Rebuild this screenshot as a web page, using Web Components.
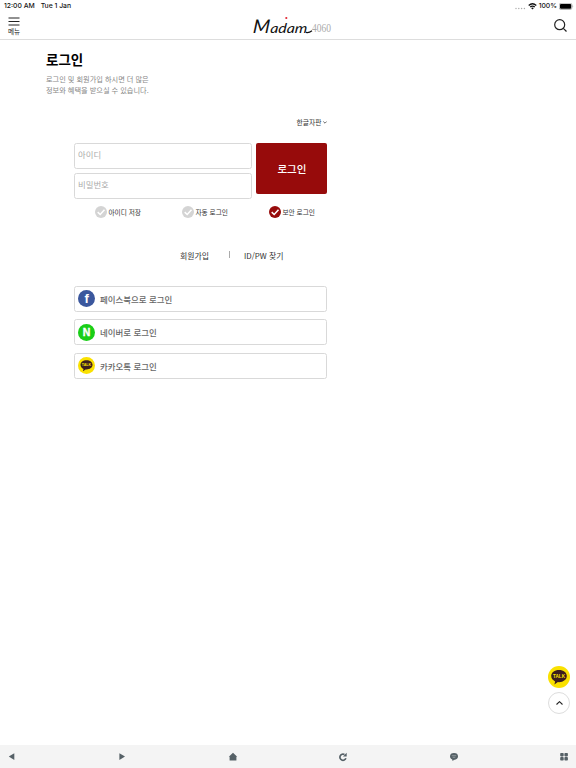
<!DOCTYPE html>
<html lang="ko">
<head>
<meta charset="utf-8">
<title>로그인</title>
<style>
  html, body { margin: 0; height: 100%; }
  body {
    background: #fff;
    color: #222;
    font-family: "Noto Sans CJK KR", "Noto Sans", sans-serif;
    overflow: hidden;
  }
</style>
</head>
<body>
<mall-app></mall-app>
<script>
const define = (name, html) => {
  customElements.define(name, class extends HTMLElement {
    constructor() {
      super();
      this.attachShadow({ mode: "open" });
      this.shadowRoot.innerHTML = html;
    }
  });
};

// device status line
define("status-bar", `
  <style>
    :host {
      display: flex; justify-content: space-between; align-items: center;
      height: 12px; padding: 0 2px 0 4px; box-sizing: border-box;
      font: 500 6.8px/12px Inter, sans-serif; color: #111;
    }
    div { display: flex; align-items: center; }
    .time { gap: 6px; }
    .state { gap: 2px; }
    svg { display: block; }
  </style>
  <div class="time"><span>12:00 AM</span><span>Tue 1 Jan</span></div>
  <div class="state">
    <svg width="11" height="8" viewBox="0 0 11 8" fill="#aaa"><circle cx="1" cy="6.5" r=".7"/><circle cx="3.8" cy="6.5" r=".7"/><circle cx="6.6" cy="6.5" r=".7"/><circle cx="9.4" cy="6.5" r=".7"/></svg>
    <svg width="9" height="7" viewBox="0 0 9 7" fill="none" stroke="#111" stroke-width="1.3"><path d="M.7 2.5Q4.5-.9 8.3 2.5M2.2 4.1Q4.5 2.1 6.8 4.1"/><path d="M3.1 5Q4.5 4 5.9 5L4.5 6.6z" fill="#111" stroke="none"/></svg>
    <span>100%</span>
    <svg width="15" height="7" viewBox="0 0 15 7"><rect x=".3" y=".3" width="12.6" height="6.2" rx="1.6" fill="#fff" stroke="#777" stroke-width=".5"/><rect x="1" y="1" width="11.2" height="4.8" rx="1"/><path d="M13.7 2.3q1 .9 0 2z" fill="#777"/></svg>
  </div>`);

define("brand-logo", `
  <style>:host { display: block; } svg { display: block; overflow: visible; }</style>
  <svg width="80" height="20" viewBox="0 0 80 20">
    <g transform="translate(.5 17) skewX(-5)" font-family="Lato" font-style="italic" fill="#111">
      <text x="0" y="0" textLength="17" lengthAdjust="spacingAndGlyphs" font-size="19">M</text>
      <text x="17.5" y="0" textLength="37" lengthAdjust="spacingAndGlyphs" font-size="13.5">adam</text>
    </g>
    <path d="M54 16.4Q57 17 60 14.8" fill="none" stroke="#111" stroke-width="1.2"/>
    <circle cx="34.3" cy="2" r="1.1" fill="#e22632"/>
    <text x="60" y="16.3" textLength="19" lengthAdjust="spacingAndGlyphs" font-family="Liberation Serif" font-size="12.5" fill="#aaa">4060</text>
  </svg>`);

define("site-header", `
  <style>
    :host {
      display: grid; grid-template-columns: 1fr 80px 1fr;
      height: 28px; padding: 0 9px 0 8px; box-sizing: border-box;
      border-bottom: 1px solid #ddd;
    }
    .menu { display: flex; flex-direction: column; align-items: flex-start; gap: 1px; padding-top: 5px; font-size: 6.6px; line-height: 9px; color: #222; }
    brand-logo { padding: 4px 0 0 4.5px; }
    .search { justify-self: end; padding-top: 7px; }
    svg { display: block; }
  </style>
  <div class="menu">
    <svg width="12" height="9" viewBox="0 0 12 9" stroke="#222"><path d="M.5 1h11M.5 4.5h11M.5 8h11"/></svg>
    <span>메뉴</span>
  </div>
  <brand-logo></brand-logo>
  <div class="search">
    <svg width="13" height="13" viewBox="0 0 13 13" fill="none" stroke="#222" stroke-width="1.2"><circle cx="5.7" cy="5.7" r="5"/><path d="M9.3 9.3L12.5 12.5"/></svg>
  </div>`);

define("text-field", `
  <style>
    :host {
      display: block; height: 26px; box-sizing: border-box; padding-left: 2.6px;
      border: 1px solid #d9d9d9; border-radius: 2.5px;
      font-size: 8.4px; line-height: 21px; color: #aaa;
    }
  </style>
  <slot></slot>`);

define("check-option", `
  <style>
    :host { display: flex; align-items: center; gap: 1px; font-size: 6.7px; line-height: 12px; color: #333; --tick: #d4d4d4; }
    :host([checked]) { --tick: #970b0b; }
    svg { display: block; }
    span { white-space: nowrap; }
  </style>
  <svg width="12" height="12" viewBox="0 0 12 12"><circle cx="6" cy="6" r="6" fill="var(--tick)"/><path d="M2.7 6.1L5.2 8.5L9.5 3.7" fill="none" stroke="#fff" stroke-width="1.5"/></svg>
  <span><slot></slot></span>`);

define("talk-icon", `
  <style>:host { display: block; } svg { display: block; width: 100%; height: 100%; }</style>
  <svg viewBox="0 0 22 22">
    <circle cx="11" cy="11" r="11" fill="#fae100"/>
    <path d="M11 4.1c4.5 0 7.8 2.6 7.8 6s-3.3 6.1-7.8 6.1l-1.1-.1-3.5 2.5.7-3.2C4.8 14.4 3.2 12.4 3.2 10.1c0-3.4 3.3-6 7.8-6z" fill="#3b1e1e"/>
    <text x="11" y="12" text-anchor="middle" textLength="12" lengthAdjust="spacingAndGlyphs" font-family="Liberation Sans" font-weight="700" font-size="5.2" fill="#fae100">TALK</text>
  </svg>`);

define("social-button", `
  <style>
    :host {
      display: flex; align-items: center; gap: 5px;
      height: 26px; box-sizing: border-box; padding-left: 2.6px;
      border: 1px solid #d9d9d9; border-radius: 2.5px;
      font-size: 8.45px; font-weight: 500; line-height: 24px; color: #666;
    }
    ::slotted([slot=icon]) { display: block; width: 17px; height: 17px; overflow: visible; }
  </style>
  <slot name="icon"></slot><span><slot></slot></span>`);

define("login-form", `
  <style>
    :host { display: block; width: 253px; margin-left: 74.4px; }
    .keyboard { display: flex; justify-content: flex-end; align-items: center; gap: 2px; height: 12px; font-size: 6.8px; line-height: 12px; color: #333; }
    .entry { display: grid; grid-template-columns: 177.5px 71px; gap: 4.5px; margin-top: 15px; }
    .fields { display: flex; flex-direction: column; gap: 4px; }
    .submit {
      height: 51px; border-radius: 2px; background: #970b0b; color: #fff;
      text-align: center; font-size: 10.5px; font-weight: 500; line-height: 51px;
    }
    .options { display: flex; padding-left: 21px; margin-top: 7.4px; }
    check-option { width: 87px; }
    check-option[checked] { width: 50px; }
    .links { display: flex; align-items: center; height: 12px; margin: 31.6px 0 0 105.6px; font-size: 7.9px; line-height: 12px; color: #333; }
    .links i { width: 1px; height: 7px; margin: 0 13.6px 2px 20.4px; background: #aaa; }
    .social { display: flex; flex-direction: column; gap: 7.6px; margin-top: 23.8px; }
    svg { display: block; }
  </style>
  <div class="keyboard"><span>한글자판</span><svg width="4" height="3" viewBox="0 0 4 3" fill="none" stroke="#444" stroke-width=".8"><path d="M.3 .5L2 2.2L3.7 .5"/></svg></div>
  <div class="entry">
    <div class="fields">
      <text-field>아이디</text-field>
      <text-field>비밀번호</text-field>
    </div>
    <div class="submit">로그인</div>
  </div>
  <div class="options">
    <check-option>아이디 저장</check-option>
    <check-option>자동 로그인</check-option>
    <check-option checked>보안 로그인</check-option>
  </div>
  <div class="links"><span>회원가입</span><i></i><span>ID/PW 찾기</span></div>
  <div class="social">
    <social-button>
      <svg slot="icon" viewBox="0 0 17 17"><circle cx="8.5" cy="8.5" r="8.5" fill="#3b579d"/><text x="8.6" y="13.2" text-anchor="middle" font-family="Liberation Sans" font-weight="700" font-size="13" fill="#fff">f</text></svg>
      페이스북으로 로그인
    </social-button>
    <social-button>
      <svg slot="icon" viewBox="0 0 17 17"><circle cx="8.5" cy="8.5" r="8.5" fill="#19ce17"/><text x="8.5" y="12.2" text-anchor="middle" font-family="Liberation Sans" font-weight="700" font-size="10.5" fill="#fff" stroke="#fff" stroke-width=".4">N</text></svg>
      네이버로 로그인
    </social-button>
    <social-button><talk-icon slot="icon"></talk-icon>카카오톡 로그인</social-button>
  </div>`);

define("float-tools", `
  <style>
    :host { position: absolute; right: 6px; bottom: 54.5px; display: flex; flex-direction: column; gap: 4px; }
    talk-icon { width: 22px; height: 22px; }
    .top { display: grid; place-items: center; width: 22px; height: 22px; box-sizing: border-box; border: 1px solid #ddd; border-radius: 50%; background: #fff; }
  </style>
  <talk-icon></talk-icon>
  <div class="top"><svg width="7" height="4" viewBox="0 0 7 4" fill="none" stroke="#222" stroke-width="1.1"><path d="M.5 3.5L3.5 .7L6.5 3.5"/></svg></div>`);

// bottom browser controls
define("app-toolbar", `
  <style>
    :host {
      display: flex; justify-content: space-between; align-items: center;
      height: 23px; padding: 0 7px; box-sizing: border-box; background: #f4f4f4;
    }
    svg { display: block; width: 10px; height: 10px; fill: #566167; overflow: visible; }
  </style>
  <svg viewBox="0 0 10 10"><path d="M7.3 1.3v6.6L1.8 4.6z"/></svg>
  <svg viewBox="0 0 10 10"><path d="M2.4 1.3v6.6L8 4.6z"/></svg>
  <svg viewBox="0 0 10 10"><path d="M5 .8L9.2 4.8H8.4V8.5H1.6V4.8H.8z"/></svg>
  <svg viewBox="0 0 10 10"><path d="M7.9 6.3A3.1 3.1 0 1 1 6.5 2.5" fill="none" stroke="#566167" stroke-width="1.7"/><path d="M5 4.5L8.7 4.6V.7z"/></svg>
  <svg viewBox="0 0 10 10"><ellipse cx="5" cy="4.3" rx="4" ry="3.4"/><path d="M3.2 7l.3 1.9L6 7.3z"/><path d="M2.8 3.7h4.4M3.7 5.3h2.6" stroke="#b5babd" stroke-width=".6"/></svg>
  <svg viewBox="0 0 10 10"><rect x="1.2" y=".9" width="3.5" height="3.5" rx=".8"/><rect x="5.4" y=".9" width="3.5" height="3.5" rx=".8"/><rect x="1.2" y="5.1" width="3.5" height="3.5" rx=".8"/><rect x="5.4" y="5.1" width="3.5" height="3.5" rx=".8"/></svg>`);

define("mall-app", `
  <style>
    :host { display: flex; flex-direction: column; height: 100vh; position: relative; }
    main { flex: 1; padding-top: 9px; }
    h1 { margin: 0 0 0 46px; font-size: 13.5px; line-height: 20px; font-weight: 700; color: #000; }
    p { margin: 5px 0 0 46px; font-size: 7.2px; line-height: 10.7px; color: #888; }
    login-form { margin-top: 20.6px; }
  </style>
  <status-bar></status-bar>
  <site-header></site-header>
  <main>
    <h1>로그인</h1>
    <p>로그인 및 회원가입 하시면 더 많은<br>정보와 혜택을 받으실 수 있습니다.</p>
    <login-form></login-form>
  </main>
  <app-toolbar></app-toolbar>
  <float-tools></float-tools>`);
</script>
</body>
</html>
